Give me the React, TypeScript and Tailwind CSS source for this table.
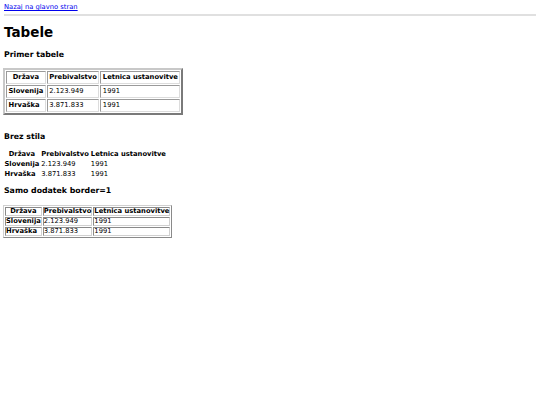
import React from 'react';

type Row = { country: string; people: string; year: string };

const rows: Row[] = [
  { country: 'Slovenija', people: '2.123.949', year: '1991' },
  { country: 'Hrvaška', people: '3.871.833', year: '1991' },
];

const headers = ['Država', 'Prebivalstvo', 'Letnica ustanovitve'];

// styled table: thick outset frame, padded inset cells
const StyledTable: React.FC = () => (
  <table className="border-separate border-spacing-[1px] border-2 border-t-[#c8c8c8] border-l-[#c8c8c8] border-r-[#7a7a7a] border-b-[#7a7a7a] text-[6.75px] leading-[7px]">
    <tbody>
      <tr>
        {headers.map((h) => (
          <th key={h} className="border border-t-[#9a9a9a] border-l-[#9a9a9a] border-r-[#dcdcdc] border-b-[#dcdcdc] px-[1.5px] py-[2px] text-center font-bold">
            {h}
          </th>
        ))}
      </tr>
      {rows.map((r) => (
        <tr key={r.country}>
          <th className="border border-t-[#9a9a9a] border-l-[#9a9a9a] border-r-[#dcdcdc] border-b-[#dcdcdc] px-[1.5px] py-[2px] text-left font-bold">
            {r.country}
          </th>
          <td className="border border-t-[#9a9a9a] border-l-[#9a9a9a] border-r-[#dcdcdc] border-b-[#dcdcdc] px-[1.5px] py-[2px]">{r.people}</td>
          <td className="border border-t-[#9a9a9a] border-l-[#9a9a9a] border-r-[#dcdcdc] border-b-[#dcdcdc] px-[1.5px] py-[2px]">{r.year}</td>
        </tr>
      ))}
    </tbody>
  </table>
);

const PlainTable: React.FC = () => (
  <table className="border-separate border-spacing-[1px] text-[6.75px] leading-[9px]">
    <tbody>
      <tr>
        {headers.map((h) => (
          <th key={h} className="px-[0.5px] text-center font-bold">
            {h}
          </th>
        ))}
      </tr>
      {rows.map((r) => (
        <tr key={r.country}>
          <th className="px-[0.5px] text-left font-bold">{r.country}</th>
          <td className="px-[0.5px]">{r.people}</td>
          <td className="px-[0.5px]">{r.year}</td>
        </tr>
      ))}
    </tbody>
  </table>
);

const BorderTable: React.FC = () => (
  <table className="border-separate border-spacing-[1px] border border-t-[#d0d0d0] border-l-[#d0d0d0] border-r-[#8a8a8a] border-b-[#8a8a8a] text-[6.75px] leading-[7px]">
    <tbody>
      <tr>
        {headers.map((h) => (
          <th key={h} className="border border-t-[#8a8a8a] border-l-[#8a8a8a] border-r-[#d0d0d0] border-b-[#d0d0d0] px-0 text-center font-bold">
            {h}
          </th>
        ))}
      </tr>
      {rows.map((r) => (
        <tr key={r.country}>
          <th className="border border-t-[#8a8a8a] border-l-[#8a8a8a] border-r-[#d0d0d0] border-b-[#d0d0d0] px-0 text-left font-bold">
            {r.country}
          </th>
          <td className="border border-t-[#8a8a8a] border-l-[#8a8a8a] border-r-[#d0d0d0] border-b-[#d0d0d0] px-0">{r.people}</td>
          <td className="border border-t-[#8a8a8a] border-l-[#8a8a8a] border-r-[#d0d0d0] border-b-[#d0d0d0] px-0">{r.year}</td>
        </tr>
      ))}
    </tbody>
  </table>
);

const App: React.FC = () => {
  return (
    <div className="min-h-[405px] bg-white px-[4px] pt-[3px] font-['DejaVu_Sans',sans-serif] text-black">
      <div className="text-[6.75px] leading-[8px]">
        <a href="#" className="text-[#0000ee] underline">
          Nazaj na glavno stran
        </a>
      </div>
      <div className="mt-[3px] h-[2px] bg-[#e0e0e0]" />

      <h1 className="mt-[9px] text-[13.5px] font-bold leading-[15px]">Tabele</h1>

      <h3 className="mt-[10px] text-[7.8px] font-bold leading-[9px]">Primer tabele</h3>
      <div className="mt-[9px] -ml-[1px]">
        <StyledTable />
      </div>

      <h3 className="mt-[17px] text-[7.8px] font-bold leading-[9px]">Brez stila</h3>
      <div className="mt-[8px] -ml-[1px]">
        <PlainTable />
      </div>

      <h3 className="mt-[6px] text-[7.8px] font-bold leading-[9px]">Samo dodatek border=1</h3>
      <div className="mt-[10px] -ml-[1px]">
        <BorderTable />
      </div>
    </div>
  );
};

export default App;
